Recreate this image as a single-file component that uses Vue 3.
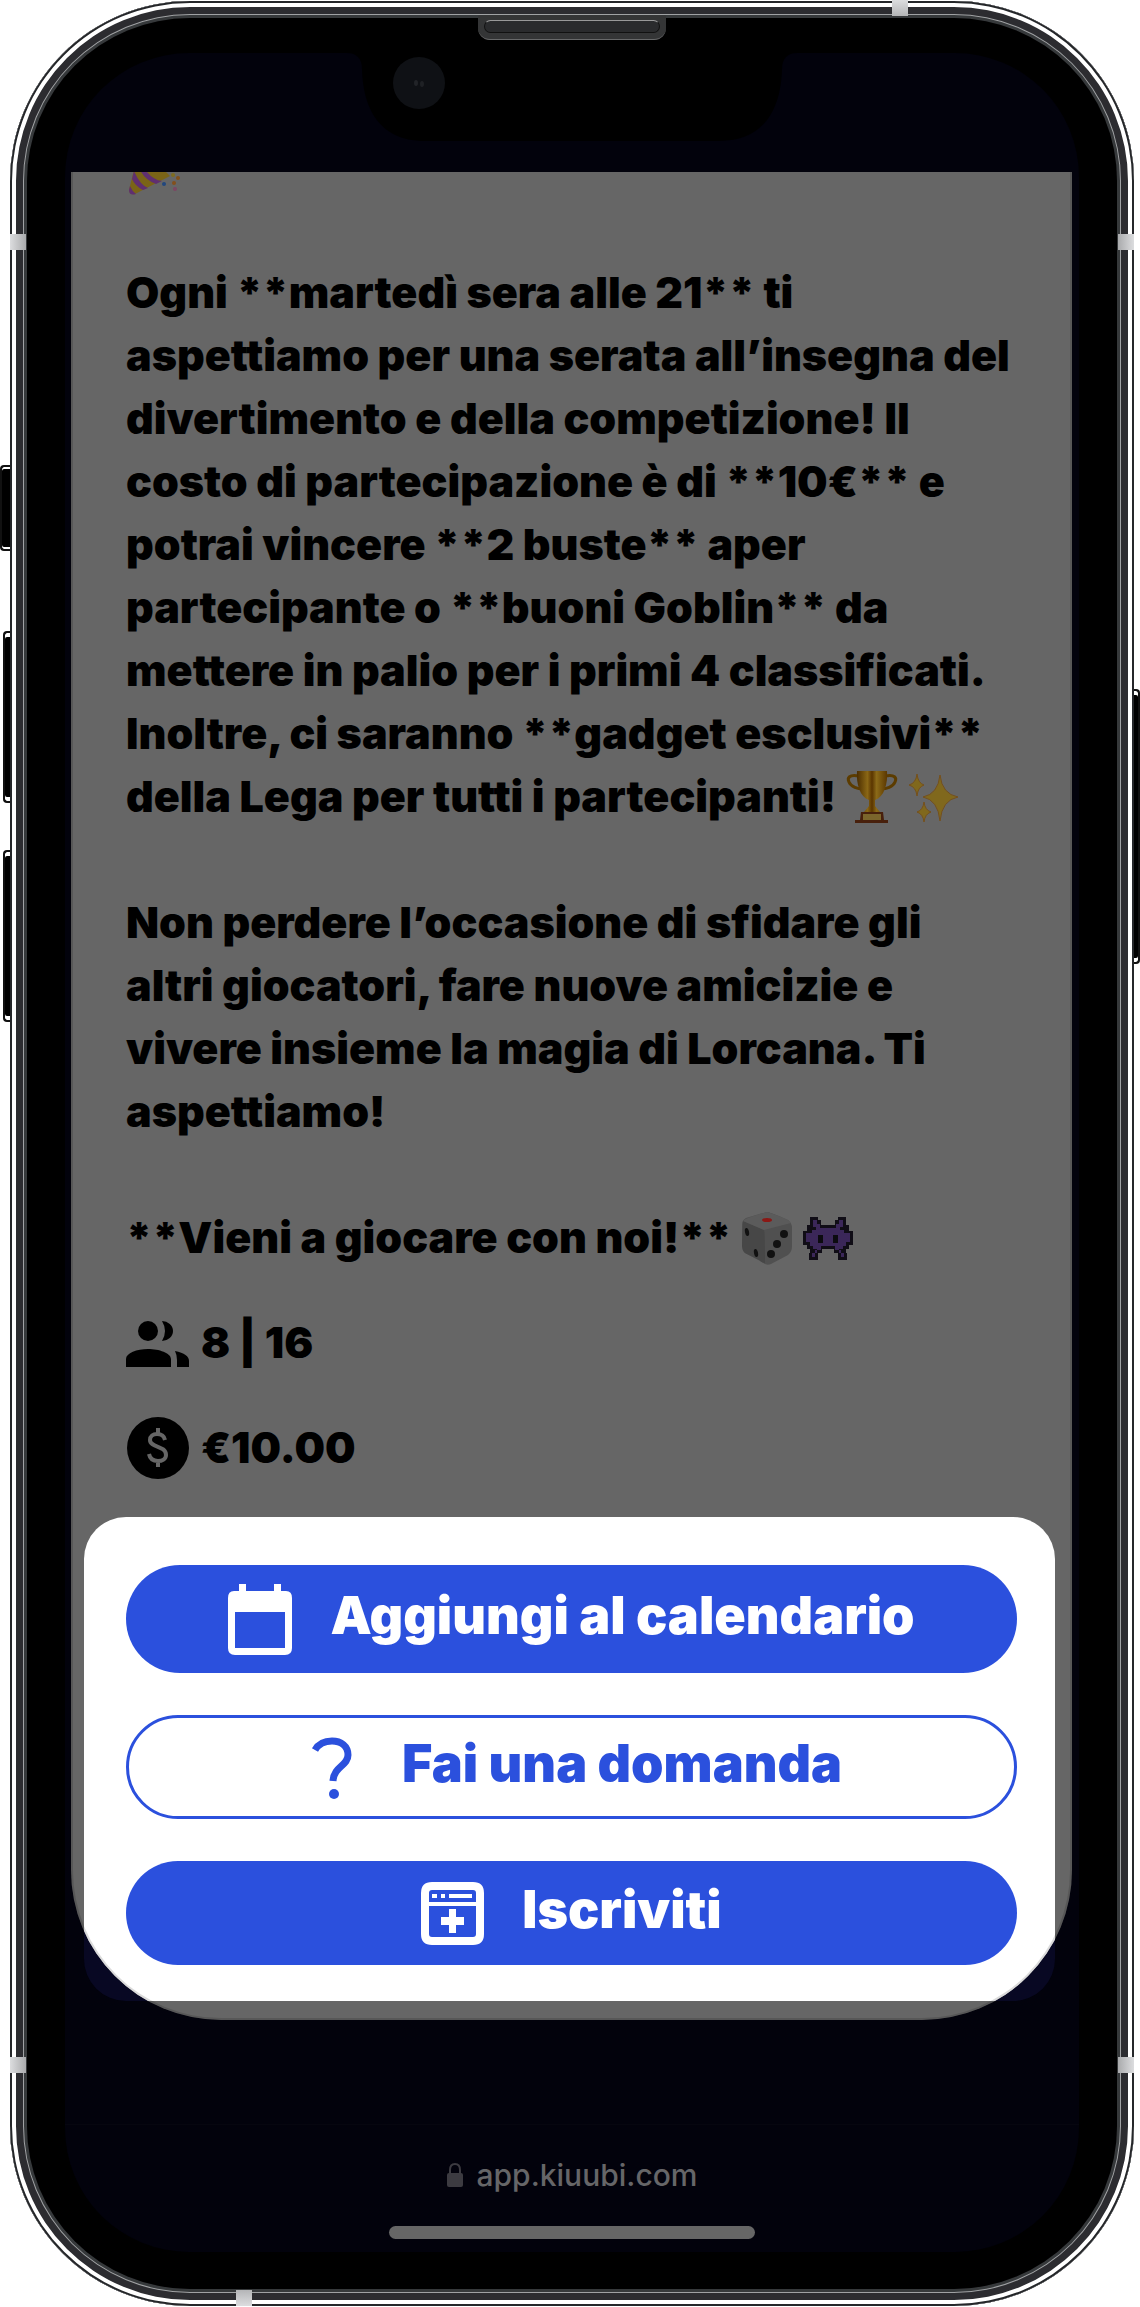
<template>
  <main class="stage">
    <div class="phone">
      <i class="key mute" />
      <i class="key vol-up" />
      <i class="key vol-down" />
      <i class="key power" />
      <i v-for="b in bands" :key="b" class="band" :class="b" />

      <div class="bezel">
        <div class="speaker"><i /></div>

        <div class="screen">
          <svg class="notch" viewBox="0 0 450 88" aria-hidden="true">
            <path d="M0 0C10 0 15 6 15 16C16 52 30 88 78 88H372C420 88 434 52 435 16C435 6 440 0 450 0Z" fill="#000" />
            <circle cx="72" cy="30" r="26" fill="#0f1115" />
            <ellipse cx="69" cy="30" rx="2" ry="3" fill="#222428" />
            <ellipse cx="75" cy="31" rx="2" ry="3" fill="#1f2125" />
          </svg>

          <div class="view">
            <div class="page">
              <article class="event">
                <div class="line">
                  <svg class="emoji" viewBox="0 0 54 54" aria-hidden="true">
                    <path d="M10 20L3 48Q3 53 9 52L44 34Q40 30 30 20Z" fill="#7a6417" />
                    <path d="M8 29Q14 43 22 46L17 48Q9 44 6 37ZM18 26Q26 38 36 39L30 42Q19 38 14 28Z" fill="#5f2f70" />
                    <path d="M4 44Q6 49 10 52Q3 54 3 48Z" fill="#5f2f70" />
                    <circle cx="38" cy="42" r="2" fill="#22477e" />
                    <circle cx="47" cy="33" r="2" fill="#7f6c1e" />
                    <circle cx="52" cy="36" r="2" fill="#815019" />
                    <circle cx="48" cy="41" r="2" fill="#84501c" />
                    <circle cx="49" cy="47" r="2" fill="#7d4664" />
                  </svg>
                </div>
                <p class="text">{{ invite }}
                  <svg class="emoji" viewBox="0 0 54 54" aria-hidden="true">
                    <defs>
                      <linearGradient id="gold">
                        <stop offset="0" stop-color="#4b2d00" />
                        <stop offset=".35" stop-color="#8a6715" />
                        <stop offset=".5" stop-color="#5a3500" />
                        <stop offset=".65" stop-color="#8b6a18" />
                        <stop offset="1" stop-color="#5b3700" />
                      </linearGradient>
                    </defs>
                    <path d="M14 6C4 4 2 8 4 12C6 17 13 19 18 19M40 6C50 4 52 8 50 12C48 17 41 19 36 19" fill="none" stroke="#5c3c00" stroke-width="3" />
                    <path d="M12 1H42C43 14 39 27 30 30V36L35 42H19L24 36V30C15 27 11 14 12 1Z" fill="url(#gold)" />
                    <path d="M16 42H38L39 50H43V53H10V50H15Z" fill="#48200c" />
                    <path d="M18 44H36V50H18Z" fill="#7b652c" />
                  </svg>
                  <svg class="emoji" viewBox="0 0 54 54" aria-hidden="true">
                    <path d="M34 5Q36 24 52 27Q36 30 34 51Q32 30 17 27Q32 24 34 5ZM11 4Q12 13 18 15Q12 17 11 26Q10 17 3 15Q10 13 11 4ZM18 32Q19 40 25 42Q19 44 18 52Q17 44 11 42Q17 40 18 32Z" fill="#80681d" stroke="#75501c" />
                  </svg>
                </p>
                <p class="text">{{ closing }}</p>
                <p class="text">**Vieni a giocare con noi!**
                  <svg class="emoji" viewBox="0 0 54 54" aria-hidden="true">
                    <path d="M27 1Q30 1 48 9Q52 12 52 17V35Q52 41 48 44L31 53Q26 55 22 51L5 42Q2 39 2 34V14Q2 9 6 7Z" fill="#505050" />
                    <path d="M3 10L24 19Q25 20 25 52Q22 52 19 49L5 42Q2 39 2 34Z" fill="#474747" />
                    <path d="M3 10Q5 7 27 1Q49 8 51 12L24 19Z" fill="#5b5b5b" />
                    <ellipse cx="27" cy="9" rx="5" ry="2" fill="#8b1815" />
                    <ellipse cx="7" cy="21" rx="2" ry="4" fill="#111" transform="rotate(-12 7 21)" />
                    <ellipse cx="16" cy="42" rx="2" ry="4" fill="#111" transform="rotate(-12 16 42)" />
                    <circle cx="44" cy="23" r="4" fill="#111" />
                    <circle cx="37" cy="33" r="4" fill="#111" />
                    <circle cx="31" cy="43" r="4" fill="#111" />
                  </svg>
                  <svg class="emoji" viewBox="0 0 54 54" aria-hidden="true">
                    <path d="M9 6H17V9H20V14H34V9H37V6H45V14H48V20H52V34H48V38H45V42H46V49H37V42H33V38H21V42H17V49H8V42H9V38H6V34H2V20H6V14H9Z" fill="#100d16" />
                    <path d="M12 9H16V13H19V17H35V13H38V9H42V16H39V19H43V22H49V31H45V35H42V38H38V42H43V46H40V39H34V35H20V39H14V46H11V42H16V38H12V35H9V31H5V22H11V19H15V16H12Z" fill="#3b2759" />
                    <path d="M17 24H22V32H17ZM32 24H37V32H32Z" fill="#0c0b10" />
                  </svg>
                </p>
                <div class="fact">
                  <svg viewBox="0 0 63 63" aria-hidden="true">
                    <circle cx="22" cy="20" r="10" />
                    <path d="M36 10A11 10 0 0 1 36 30Q42 20 36 10ZM0 56V48C0 42 11 38 22 38S45 42 45 48V56ZM49 40Q63 43 63 50V56H51V49Q51 44 49 40Z" />
                  </svg>
                  <span>8 | 16</span>
                </div>
                <div class="fact">
                  <svg viewBox="0 0 63 63" aria-hidden="true">
                    <circle cx="32" cy="32" r="31" />
                    <path d="M39 24C38 19 35 18 31 18C27 18 24 20 24 24C24 32 40 29 40 39C40 43 36 45 32 45C27 45 24 43 23 38M32 12V18M32 45V51" fill="none" stroke="#666" stroke-width="4" />
                  </svg>
                  <span>€10.00</span>
                </div>
              </article>

              <section class="sheet">
                <button type="button" class="action tall">
                  <svg width="64" height="71" viewBox="0 0 64 71" aria-hidden="true">
                    <path fill-rule="evenodd" d="M11 0H18V7H46V0H53V7H58Q64 7 64 14V64Q64 71 57 71H7Q0 71 0 64V14Q0 7 6 7H11ZM7 28V64H57V28Z" />
                  </svg>
                  <span>Aggiungi al calendario</span>
                </button>
                <button type="button" class="action outline">
                  <svg width="63" height="63" viewBox="0 0 63 63" aria-hidden="true">
                    <path d="M14 14C18 7 24 5 31 5C40 5 47 10 47 19C47 30 33 30 32 45" fill="none" stroke="currentColor" stroke-width="7" />
                    <circle cx="33" cy="58" r="5" />
                  </svg>
                  <span>Fai una domanda</span>
                </button>
                <button type="button" class="action">
                  <svg width="63" height="63" viewBox="0 0 63 63" aria-hidden="true">
                    <path fill-rule="evenodd" d="M11 0H52Q63 0 63 11V52Q63 63 52 63H11Q0 63 0 52V11Q0 0 11 0ZM11 8Q8 8 8 11V20H55V11Q55 8 52 8ZM8 24V52Q8 55 11 55H52Q55 55 55 52V24Z" />
                    <path d="M11 12h5v4h-5zM20 12h4v4h-4zM28 12h23v4H28zM28 27h7v8h8v8h-8v8h-7v-8h-8v-8h8z" />
                  </svg>
                  <span>Iscriviti</span>
                </button>
              </section>
            </div>
          </div>

          <footer class="browser">
            <div class="address">
              <svg width="16" height="24" viewBox="0 0 16 24" aria-hidden="true">
                <path d="M3 11V7Q3 1 8 1T13 7V11" fill="none" stroke="#3c3b41" stroke-width="2" />
                <rect y="10" width="16" height="14" rx="2" fill="#3c3b41" />
              </svg>
              <span>app.kiuubi.com</span>
            </div>
            <div class="home" />
          </footer>
        </div>
      </div>
    </div>
  </main>
</template>

<script setup>
const bands = ['top', 'bottom', 'left up', 'right up', 'left down', 'right down']

const invite = `
Ogni **martedì sera alle 21** ti
aspettiamo per una serata all’insegna del
divertimento e della competizione! Il
costo di partecipazione è di **10€** e
potrai vincere **2 buste** aper
partecipante o **buoni Goblin** da
mettere in palio per i primi 4 classificati.
Inoltre, ci saranno **gadget esclusivi**
della Lega per tutti i partecipanti!`.trim()

const closing = `
Non perdere l’occasione di sfidare gli
altri giocatori, fare nuove amicizie e
vivere insieme la magia di Lorcana. Ti
aspettiamo!`.trim()
</script>

<style>
body { margin: 0; background: #fff; }
</style>

<style scoped>
.stage {
  padding: 1px 6px 1px 10px;
  font-family: Inter, 'Liberation Sans', sans-serif;
}
.phone {
  position: relative; padding: 17px;
  border-radius: 180px;
  background: #2c2c30;
  box-shadow:
    inset 0 0 0 2px #25272a,
    inset 0 0 0 6px #fff,
    inset 0 0 0 13px #2c2c30,
    inset 0 0 0 14px #a0a2a4,
    inset 0 0 0 17px #36393b;
}
.bezel {
  position: relative; padding: 35px 38px 37px;
  border-radius: 163px; background: #000;
}
.screen {
  position: relative; padding: 119px 7px 13px 6px;
  border-radius: 124px; background: #02020c;
}

/* hardware */
.key {
  position: absolute; left: -7px; width: 7px; height: 172px;
  box-sizing: border-box;
  border: 2px solid #111; border-right: 0;
  border-radius: 4px 0 0 4px;
  background: #000; box-shadow: inset 0 4px #fff, inset 0 -4px #fff;
}
.mute { top: 464px; left: -10px; width: 10px; height: 86px; box-shadow: inset 0 2px #fff, inset 0 -2px #fff; }
.vol-up { top: 630px; }
.vol-down { top: 849px; }
.power {
  top: 688px; left: auto; right: -6px; width: 6px; height: 275px;
  border: 2px solid #111; border-left: 0;
  border-radius: 0 4px 4px 0;
}
.band {
  position: absolute; width: 16px; height: 16px;
  background: linear-gradient(90deg, #dcdddf, #a9aaac);
}
.band.top { top: -1px; right: 226px; background: linear-gradient(#dcdddf, #b4b5b7); }
.band.bottom { bottom: 0; left: 226px; background: linear-gradient(#b4b5b7, #dcdddf); }
.band.left { left: 0; }
.band.right { right: 0; background: linear-gradient(90deg, #a9aaac, #dcdddf); }
.band.up { top: 233px; }
.band.down { bottom: 233px; }
.speaker {
  position: absolute; top: -3px; left: 50%; margin-left: -94px;
  width: 188px; height: 25px; padding: 5px 6px 6px; box-sizing: border-box;
  border-radius: 2px 2px 12px 12px;
  background: #343536; border-bottom: 1px solid #68696a;
}
.speaker i {
  display: block; height: 100%; box-sizing: border-box;
  border: 1px solid #111; border-top-color: #999;
  border-radius: 7px; background: #2a2b2d;
}
.notch {
  position: absolute; top: 0; left: 50%; margin-left: -225px;
  width: 450px; height: 88px;
}

/* web page */
.view { position: relative; }
.view::before {
  content: ''; position: absolute; left: 13px; right: 17px; bottom: 19px;
  height: 200px; border-radius: 0 0 42px 42px; background: #080823;
}
.page {
  position: relative; overflow: hidden;
  padding-bottom: 19px;
  border-radius: 0 0 150px 150px;
  background: #666;
}
.page::after {
  content: ''; position: absolute; inset: 0; pointer-events: none;
  border: 2px solid rgba(0, 0, 0, 0.14); border-top: 0;
  border-radius: 0 0 150px 150px;
}
.event {
  margin-top: -37px; padding: 0 0 38px 55px;
  font-size: 43px; font-weight: 900; line-height: 63px; color: #000;
}
.line { height: 126px; }
.text { margin: 0 0 63px; white-space: pre-line; }
.text:last-of-type { margin-bottom: 42px; }
.emoji { width: 54px; height: 54px; margin-right: 7px; vertical-align: -12px; }
.line .emoji { margin-top: 7px; }
.fact { display: flex; align-items: center; gap: 12px; }
.fact + .fact { margin-top: 42px; }
.fact svg { width: 63px; height: 63px; }

/* bottom sheet */
.sheet {
  display: flex; flex-direction: column; gap: 42px;
  margin: 0 17px 0 13px; padding: 48px 38px 36px 42px;
  border-radius: 42px; background: #fff;
}
.action {
  display: flex; align-items: center; justify-content: center; gap: 38px;
  height: 104px; padding: 0;
  border: 0; border-radius: 54px;
  background: #2b50dd; color: #fff;
  font-family: inherit; font-size: 52px; font-weight: 900; line-height: 60px;
}
.action.tall { height: 108px; }
.action.outline { border: 3px solid #2b50dd; background: #fff; color: #2b50dd; }
.action svg { fill: currentColor; flex: none; }
.action span { padding-bottom: 6px; }

/* address bar */
.browser {
  display: flex; flex-direction: column; align-items: center;
  margin: 104px -7px 0 -6px; padding-top: 32px;
  border-top: 1px solid #06060f;
}
.address {
  display: flex; align-items: center; gap: 14px;
  font-size: 30px; font-weight: 500; line-height: 36px; color: #666668;
}
.home {
  width: 36%; height: 13px; margin-top: 33px;
  border-radius: 7px; background: #666;
}
</style>
